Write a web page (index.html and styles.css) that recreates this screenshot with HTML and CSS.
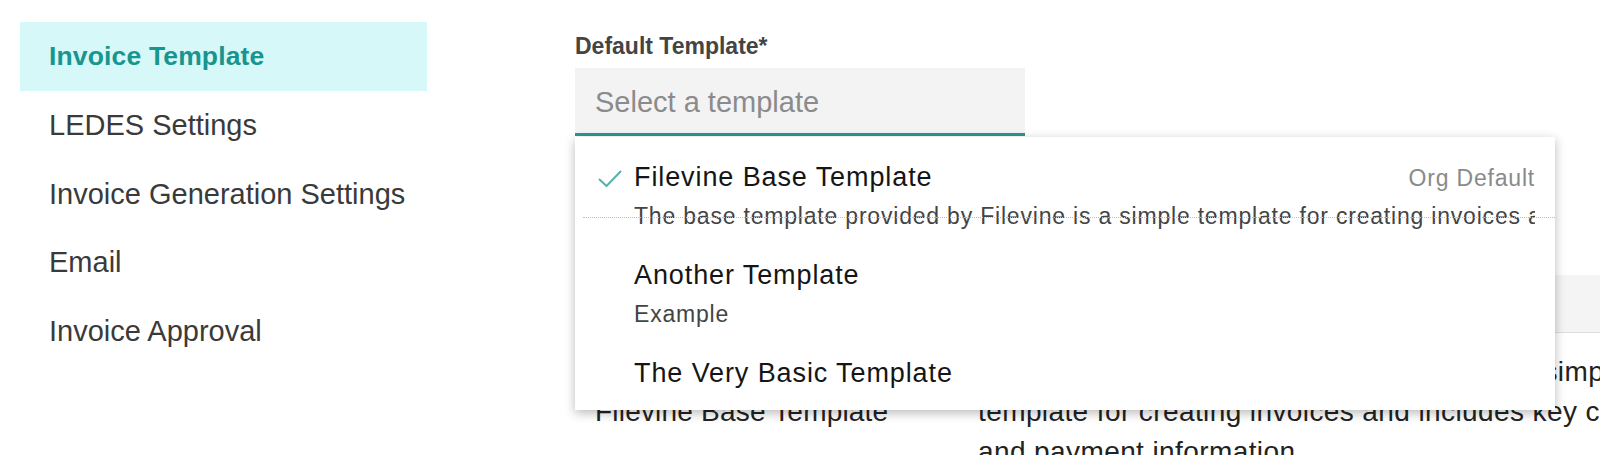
FILE: index.html
```html
<!DOCTYPE html>
<html lang="en">
<head>
<meta charset="utf-8">
<title>Invoice Template</title>
<link rel="stylesheet" href="styles.css">
</head>
<body>
<div class="page">
  <nav class="sidebar">
    <a class="nav-item active">Invoice Template</a>
    <a class="nav-item">LEDES Settings</a>
    <a class="nav-item">Invoice Generation Settings</a>
    <a class="nav-item">Email</a>
    <a class="nav-item">Invoice Approval</a>
  </nav>
  <main class="content">
    <label class="field-label">Default Template*</label>
    <div class="select">
      <div class="select-input">Select a template</div>
      <ul class="menu">
        <li class="option selected">
          <div class="option-row">
            <span class="check"><svg width="24" height="18" viewBox="0 0 24 18"><polyline points="1.5,9.5 8.5,16 22.5,1.5" fill="none" stroke="#55b1ab" stroke-width="2" stroke-linecap="round" stroke-linejoin="round"/></svg></span>
            <span class="option-title">Filevine Base Template</span>
            <span class="option-tag">Org Default</span>
          </div>
          <div class="option-desc">The base template provided by Filevine is a simple template for creating invoices and includes key contact and payment information.</div>
        </li>
        <li class="option">
          <div class="option-row">
            <span class="check"></span>
            <span class="option-title">Another Template</span>
          </div>
          <div class="option-desc">Example</div>
        </li>
        <li class="option">
          <div class="option-row">
            <span class="check"></span>
            <span class="option-title">The Very Basic Template</span>
          </div>
        </li>
      </ul>
    </div>
    <div class="table">
      <div class="thead">
        <div class="th"></div>
        <div class="th"></div>
      </div>
      <div class="trow">
        <div class="td name">Filevine Base Template</div>
        <div class="td desc">The base template provided by Filevine is a simple template for creating invoices and includes key contact and payment information.</div>
      </div>
    </div>
  </main>
</div>
</body>
</html>
```

FILE: styles.css
```css
html, body {
  margin: 0;
  padding: 0;
  width: 1600px;
  height: 455px;
  overflow: hidden;
  background: #ffffff;
}

body {
  font-family: "Liberation Sans", Arial, Helvetica, sans-serif;
}

.page {
  display: flex;
  align-items: flex-start;
}

.sidebar {
  flex: none;
  width: 407px;
  margin-left: 20px;
  padding-top: 22px;
  display: flex;
  flex-direction: column;
}

.nav-item {
  display: block;
  height: 68.75px;
  line-height: 68.75px;
  padding-left: 29px;
  font-size: 29px;
  color: #3a3a3a;
  white-space: nowrap;
}

.nav-item.active {
  background: #d6f8f8;
  color: #18958f;
  font-weight: bold;
  font-size: 26.5px;
  letter-spacing: 0.15px;
}

.content {
  flex: none;
  width: 1163px;
  margin-left: 148px;
  padding-top: 32px;
}

.field-label {
  display: block;
  font-size: 23px;
  font-weight: bold;
  line-height: 28px;
  color: #444444;
  margin-bottom: 8px;
}

.select {
  position: relative;
  width: 450px;
}

.select-input {
  height: 62px;
  padding-top: 3px;
  line-height: 62px;
  padding-left: 20px;
  background: #f3f3f3;
  border-bottom: 3px solid #2a9791;
  font-size: 29px;
  color: #8b8b8b;
}

.menu {
  position: absolute;
  top: calc(100% + 1px);
  left: 0;
  width: 980px;
  margin: 0;
  padding: 11px 0 8px;
  list-style: none;
  background: #ffffff;
  box-shadow: 0 3px 10px rgba(0, 0, 0, 0.28);
  z-index: 2;
}

.option {
  position: relative;
  padding: 10px 20px 10px 0;
}

.option.selected::after {
  content: "";
  position: absolute;
  left: 8px;
  right: 0;
  top: 69px;
  border-top: 1px dotted #bdbdbd;
}

.option-row {
  display: flex;
  align-items: baseline;
  height: 38px;
  line-height: 38px;
}

.check {
  flex: none;
  width: 59px;
  box-sizing: border-box;
  padding-left: 23px;
  align-self: center;
  display: flex;
  margin-top: 4px;
}

.option-title {
  flex: 1;
  font-size: 27px;
  letter-spacing: 0.9px;
  color: #151515;
  white-space: nowrap;
}

.option-tag {
  font-size: 23px;
  letter-spacing: 0.8px;
  color: #8a8a8a;
  white-space: nowrap;
}

.option-desc {
  margin-left: 59px;
  font-size: 23px;
  letter-spacing: 0.8px;
  line-height: 40px;
  color: #444444;
  white-space: nowrap;
  overflow: hidden;
}

.table {
  margin-top: 139px;
  width: 1143px;
}

.thead {
  display: grid;
  grid-template-columns: 403px 740px;
  align-items: center;
  height: 57px;
  background: #f4f4f4;
  border-bottom: 1px solid #dedede;
}

.trow {
  display: grid;
  grid-template-columns: 403px 740px;
  align-items: center;
  padding-top: 19px;
}

.td {
  font-size: 28px;
  letter-spacing: 0.4px;
  line-height: 40px;
  color: #222222;
}

.td.name {
  padding-left: 20px;
  letter-spacing: 0.2px;
}

.td.desc {
  padding-right: 20px;
}
```
